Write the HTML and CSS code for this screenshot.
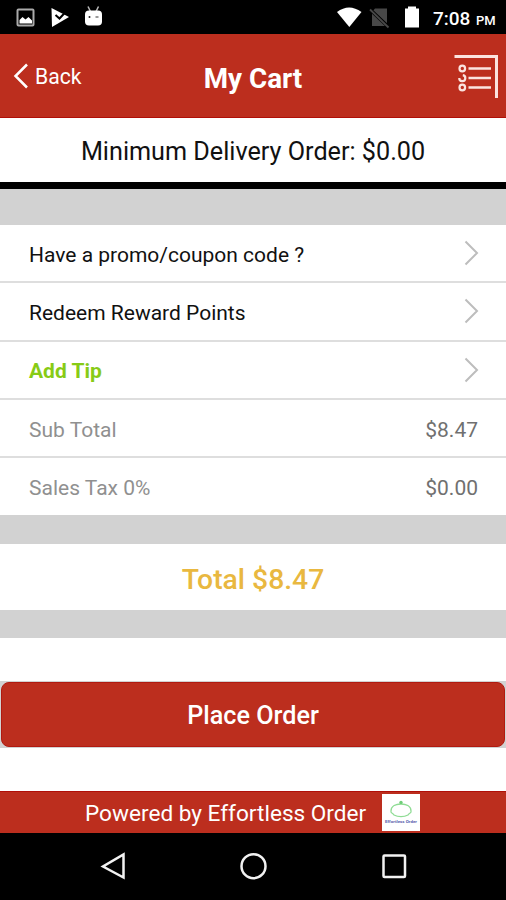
FILE: index.html
```html
<!DOCTYPE html>
<html lang="en">
<head>
<meta charset="utf-8">
<title>My Cart</title>
<link rel="stylesheet" href="styles.css">
</head>
<body>
<div class="status">
  <svg class="status-left" width="110" height="34" viewBox="0 0 110 34">
    <rect x="17.500" y="9.500" width="16" height="16" rx="1" fill="none" stroke="#aaa" stroke-width="2"/>
    <path d="M19.500 23.500V20l3-3 3 2.500 3-2.500 3.500 3.500v3z" fill="#fff"/>
    <path d="M51.500 8L69 17 52 27z" fill="#fff"/>
    <path d="M55.500 15l4 3.500 7-7.500" fill="none" stroke="#000" stroke-width="2"/>
    <path d="M88 6.500l2.500 5M98.500 6.500l-2.500 5" stroke="#bbb" stroke-width="1.500"/>
    <rect x="85" y="10.500" width="17" height="15" rx="4" fill="#fff"/>
    <circle cx="89.500" cy="17" r="1" fill="#222"/><path d="M95.500 17h3" stroke="#555" stroke-width="1.200"/>
  </svg>
  <svg class="status-right" width="84" height="34" viewBox="336 0 84 34">
    <path d="M337 12Q349 3 361.500 12L349.300 27z" fill="#fff"/>
    <path d="M375 8.500h12V26h-15V12z" fill="#484848"/>
    <path d="M369.500 9l19 18" stroke="#000" stroke-width="3.500"/>
    <path d="M370 9.500l18.500 18" stroke="#484848" stroke-width="1.800"/>
    <path d="M405 8.500h3V6.500h8v2h3V27.500h-14z" fill="#fff"/>
  </svg>
  <span class="time">7:08</span><span class="pm">PM</span>
</div>
<header class="header">
  <div class="back">
    <svg width="16" height="26" viewBox="0 0 16 26"><path d="M14 1.500L2.500 13 14 24.500" fill="none" stroke="#fff" stroke-width="2.500"/></svg>
    <span class="back-text">Back</span>
  </div>
  <h1 class="title">My Cart</h1>
  <svg class="menu" width="46" height="46" viewBox="453 55 46 46" fill="none" stroke="#fbe3df">
    <path d="M454.500 57.500H496.500V99" stroke-width="3"/>
    <path d="M468.500 69.500h22.500M468.500 79h22.500M468.500 88.500h22.500" stroke-width="2.500"/>
    <circle cx="462.300" cy="69.500" r="2.800" stroke-width="2.200"/>
    <path d="M459.300 79a3 3 0 1 0 3.500-2.800" stroke-width="2.200"/>
    <circle cx="462.300" cy="88.500" r="2.800" stroke-width="2.200"/>
  </svg>
</header>
<div class="minimum"><span>Minimum Delivery Order: $0.00</span></div>
<div class="gap gap-top"></div>
<ul class="rows">
  <li class="row"><span>Have a promo/coupon code ?</span><svg class="chev" width="16" height="26" viewBox="0 0 16 26"><path d="M2.500 1.500L14 13 2.500 24.500"/></svg></li>
  <li class="row"><span>Redeem Reward Points</span><svg class="chev" width="16" height="26" viewBox="0 0 16 26"><path d="M2.500 1.500L14 13 2.500 24.500"/></svg></li>
  <li class="row"><span class="tip">Add Tip</span><svg class="chev" width="16" height="26" viewBox="0 0 16 26"><path d="M2.500 1.500L14 13 2.500 24.500"/></svg></li>
  <li class="row muted"><span>Sub Total</span><span class="amount">$8.47</span></li>
  <li class="row muted"><span>Sales Tax 0%</span><span class="amount">$0.00</span></li>
</ul>
<div class="gap gap-mid"></div>
<div class="total"><span>Total $8.47</span></div>
<div class="gap gap-low"></div>
<div class="order"><button class="place"><span>Place Order</span></button></div>
<footer class="footer">
  <span class="powered">Powered by Effortless Order</span>
  <svg class="logo" width="38" height="37" viewBox="0 0 38 37">
    <rect width="38" height="37" fill="#fff"/>
    <path d="M9 17C9 12 14 10 19 10s10 2 10 7c1 2-2 2-3 4-4 2-10 2-14 0-1-2-4-2-3-4z" fill="none" stroke="#8fdc94" stroke-width="1.300"/>
    <circle cx="19" cy="8.500" r="1.700" fill="#6fce78"/>
    <text x="3" y="28.500" textLength="32" lengthAdjust="spacingAndGlyphs" class="logo-text">Effortless Order</text>
  </svg>
</footer>
<nav class="nav">
  <svg width="506" height="66" viewBox="0 833.500 506 66" fill="none" stroke="#f2f2f2" stroke-width="2.500">
    <path d="M123.500 855V878L103 867z"/>
    <circle cx="253.500" cy="866.700" r="12"/>
    <rect x="383.500" y="856" width="21.500" height="21.500" rx="1"/>
  </svg>
</nav>
</body>
</html>
```
FILE: styles.css
```css
* { box-sizing: border-box; }
body { margin: 0; width: 506px; height: 900px; overflow: hidden; background: #fff; color: #111; font-family: Roboto, sans-serif; }
svg { display: block; flex: none; }
span, h1 { white-space: nowrap; }
.status { height: 34px; background: #000; color: #fff; display: flex; align-items: center; }
.status-right { margin-left: 226px; }
.time { margin-left: 13px; font-size: 19px; font-weight: 500; padding-top: 3px; }
.pm { margin-left: 5.500px; font-size: 13px; font-weight: 500; padding-top: 6px; }
.header { height: 84px; background: #bc2e1e; border-bottom: 1px solid #b00f08; color: #fff; display: grid; grid-template-columns: 188px 1fr 188px; align-items: center; padding: 2px 7px 0 13px; }
.back { display: flex; align-items: center; gap: 6px; margin-top: -2px; }
.back-text { font-size: 21.200px; padding-top: 2px; }
.title { margin: 3px 0 0 -6px; text-align: center; font-size: 27.800px; font-weight: 700; }
.menu { justify-self: end; }
.minimum { height: 71px; border-bottom: 7.500px solid #000; display: flex; align-items: center; justify-content: center; padding-top: 3px; font-size: 25.200px; }
.gap { background: #d2d2d2; }
.gap-top { height: 36px; }
.rows { list-style: none; margin: 0; padding: 0; }
.row { height: 58.300px; padding: 0 27px 0 29px; display: flex; align-items: center; justify-content: space-between; border-bottom: 2px solid #dedede; font-size: 21px; }
.row span { padding-top: 3px; }
.row:last-child { border-bottom: 0; height: 57.300px; }
.chev { fill: none; stroke: #bdbdbd; stroke-width: 2; }
.tip { color: #87cb16; font-weight: 700; }
.muted { color: #909090; }
.amount { color: #707070; margin-right: 1px; }
.gap-mid { height: 29px; }
.total { height: 66px; display: flex; align-items: center; justify-content: center; padding-top: 5px; color: #e9b840; font-size: 28.300px; font-weight: 500; }
.gap-low { height: 28px; }
.order { margin: 42.500px 0 43px; height: 67px; background: #d2d2d2; padding: 1px; }
.place { display: block; width: 100%; height: 65px; border: 1px solid #b11a10; border-radius: 8px; background: #bc2e1e; color: #fff; font: 500 25.200px Roboto, sans-serif; padding: 3px 0 0; }
.footer { height: 42.500px; background: #bc2e1e; border-top: 1px solid #b00f08; color: #fff; display: flex; align-items: center; padding-left: 85px; gap: 16px; font-size: 22.600px; }
.powered { padding-top: 1px; }
.logo-text { font: 700 4px Roboto, sans-serif; fill: #5961ad; }
.nav { height: 67px; background: #000; }
```
